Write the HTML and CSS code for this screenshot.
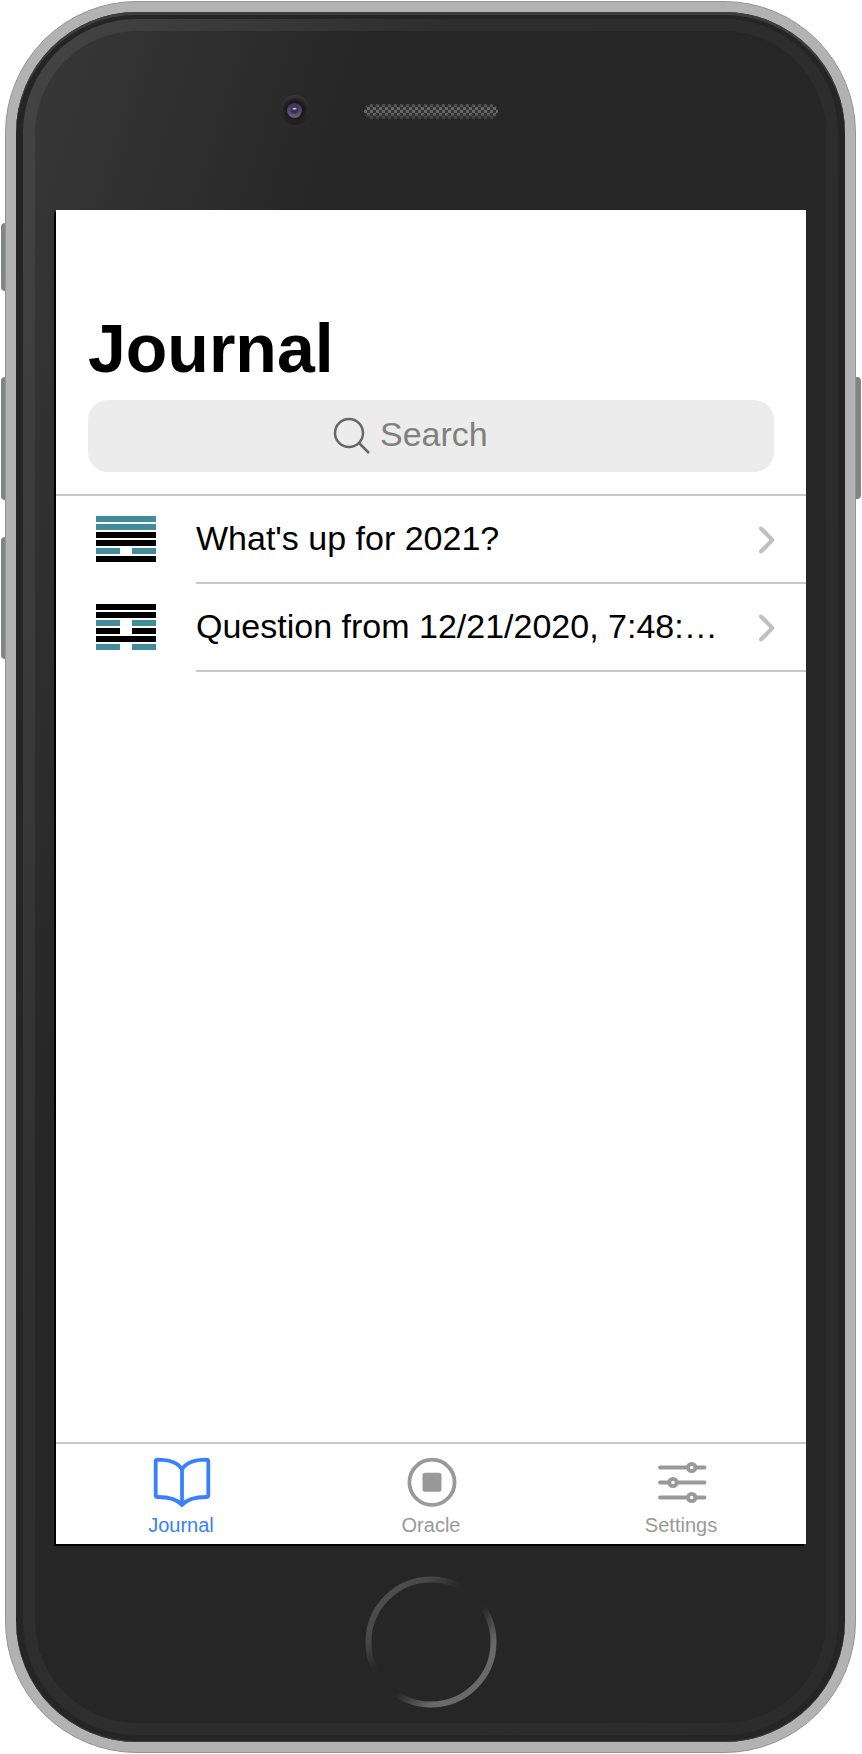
FILE: index.html
```
<!DOCTYPE html>
<html lang="en">
<head>
<meta charset="utf-8">
<title>Journal</title>
<link rel="stylesheet" href="styles.css">
</head>
<body>
<div class="device">
  <span class="key key-mute"></span>
  <span class="key key-up"></span>
  <span class="key key-down"></span>
  <span class="key key-power"></span>
  <div class="frame">
    <div class="bezel">
      <div class="rim">
        <div class="face">
          <div class="sensors">
            <span class="camera"><span class="lens"></span></span>
            <svg class="speaker" viewBox="0 0 134 15">
              <defs>
                <pattern id="mesh" width="6" height="6" patternUnits="userSpaceOnUse">
                  <rect width="6" height="6" fill="#333"/>
                  <rect width="3" height="3" fill="#6b6b6b"/>
                  <rect x="3" y="3" width="3" height="3" fill="#6b6b6b"/>
                </pattern>
                <linearGradient id="shade" x1="0" y1="0" x2="0" y2="1">
                  <stop offset="0" stop-color="#262626" stop-opacity=".55"/>
                  <stop offset=".3" stop-color="#262626" stop-opacity="0"/>
                  <stop offset=".6" stop-color="#262626" stop-opacity=".1"/>
                  <stop offset="1" stop-color="#262626" stop-opacity=".75"/>
                </linearGradient>
              </defs>
              <rect width="134" height="15" rx="7.5" fill="url(#mesh)"/>
              <rect width="134" height="15" rx="7.5" fill="url(#shade)"/>
            </svg>
          </div>
          <main class="screen">
            <header class="header">
              <h1 class="title">Journal</h1>
              <div class="search">
                <svg class="search-icon" viewBox="0 0 38 38"><circle cx="16" cy="16" r="14" /><path d="M26 26l10 10"/></svg>
                <span>Search</span>
              </div>
            </header>
            <ul class="entries">
              <li class="entry">
                <svg class="hexagram" viewBox="0 0 60 46">
                  <path class="moving" d="M0 0h60v6H0zM0 8h60v6H0zM0 32h24v6H0zM36 32h24v6H36z"/>
                  <path d="M0 16h60v6H0zM0 24h60v6H0zM0 40h60v6H0z"/>
                </svg>
                <div class="entry-body">
                  <span class="entry-title">What's up for 2021?</span>
                  <svg class="chevron" viewBox="0 0 16 28"><path d="M2 2.500L13.300 14 2 25.500"/></svg>
                </div>
              </li>
              <li class="entry">
                <svg class="hexagram" viewBox="0 0 60 46">
                  <path class="moving" d="M0 16h24v6H0zM36 16h24v6H36zM0 40h24v6H0zM36 40h24v6H36z"/>
                  <path d="M0 0h60v6H0zM0 8h60v6H0zM0 24h24v6H0zM36 24h24v6H36zM0 32h60v6H0z"/>
                </svg>
                <div class="entry-body">
                  <span class="entry-title">Question from 12/21/2020, 7:48:…</span>
                  <svg class="chevron" viewBox="0 0 16 28"><path d="M2 2.500L13.300 14 2 25.500"/></svg>
                </div>
              </li>
            </ul>
            <nav class="tabs">
              <div class="tab active">
                <svg class="tab-icon" viewBox="0 0 60 60"><path d="M30 16.500C26 9.500 16 6.700 5.500 6.700Q3.700 6.700 3.700 8.500V42Q3.700 44 5.700 44C16 44 25 46 30 52C35 46 44 44 54.300 44Q56.300 44 56.300 42V8.500Q56.300 6.700 54.500 6.700C44 6.700 34 9.500 30 16.500V52"/></svg>
                <span>Journal</span>
              </div>
              <div class="tab">
                <svg class="tab-icon" viewBox="0 0 60 60"><circle cx="30" cy="29.300" r="22.600"/><rect class="solid" x="20.500" y="19.800" width="19" height="19" rx="2.500"/></svg>
                <span>Oracle</span>
              </div>
              <div class="tab">
                <svg class="tab-icon" viewBox="0 0 60 60"><path d="M8 14.500H36M44 14.500H52.500M8 29.500H17M25.500 29.500H52.500M8 44.500H36M44 44.500H52.500"/><circle cx="39.700" cy="14.500" r="3.700"/><circle cx="21" cy="29.500" r="3.700"/><circle cx="39.700" cy="44.500" r="3.700"/></svg>
                <span>Settings</span>
              </div>
            </nav>
          </main>
          <div class="chin">
            <svg class="home" viewBox="0 0 132 132">
              <defs>
                <linearGradient id="ring" x1="0" y1="0" x2="1" y2="1">
                  <stop offset=".1" stop-color="#505050"/>
                  <stop offset=".25" stop-color="#464646"/>
                  <stop offset=".37" stop-color="#292929"/>
                  <stop offset=".42" stop-color="#262626"/>
                  <stop offset=".57" stop-color="#262626"/>
                  <stop offset=".75" stop-color="#686868"/>
                  <stop offset="1" stop-color="#6c6c6c"/>
                </linearGradient>
              </defs>
              <circle cx="66" cy="66" r="62.500" fill="none" stroke="url(#ring)" stroke-width="6"/>
            </svg>
          </div>
        </div>
      </div>
    </div>
  </div>
</div>
</body>
</html>
```
FILE: styles.css
```
* { box-sizing: border-box; }
body {
  margin: 0;
  background: #fff;
  font-family: "Liberation Sans", Arial, sans-serif;
}
.device {
  position: relative;
  width: 862px;
  height: 1754px;
  padding: 1px 6px 1px 5px;
}
.frame {
  position: relative;
  height: 100%;
  padding: 10px;
  border: 1px solid #949494;
  border-radius: 132px;
  background: #b2b2b2;
}
.bezel {
  height: 100%;
  padding: 7px;
  border-radius: 121px;
  background: #252525;
  box-shadow: inset 0 3px 0 #3d3d3d, inset 0 -1px 0 #3d3d3d;
}
.rim {
  height: 100%;
  padding: 12px;
  border-radius: 114px;
  background: linear-gradient(107deg, #454545 0, #2e2e2e 400px, #2b2b2b 100%);
}
.face {
  display: grid;
  grid-template-rows: 179px 1334px 1fr;
  height: 100%;
  padding: 0 20px 0 21px;
  border-radius: 102px;
  background: linear-gradient(107deg, #383838 0, #262626 335px);
}
.sensors {
  display: flex;
  align-items: flex-start;
  padding: 64px 0 0 223.500px;
}
.camera {
  display: grid;
  place-items: center;
  width: 30px;
  height: 30px;
  border-radius: 50%;
  background: radial-gradient(circle, #18181c 8px, #1e1e1e 10px, transparent 13px), linear-gradient(#343434, #202020);
}
.lens {
  width: 15px;
  height: 15px;
  border-radius: 50%;
  background: radial-gradient(ellipse 3px 1.500px at 50% 38%, #c8c0d4 30%, transparent), radial-gradient(circle at 50% 48%, #34303c 3px, transparent 4.500px), linear-gradient(#3c2e5c, #6c5c8c);
}
.speaker {
  width: 134px;
  height: 15px;
  margin: 9px 0 0 54.500px;
}
.screen {
  display: flex;
  flex-direction: column;
  width: 750px;
  height: 1334px;
  background: #fff;
  box-shadow: -2px 2px 0 #000;
}
.header {
  height: 286px;
  padding: 98px 32px 0;
  border-bottom: 2px solid #c8c8c8;
}
.title {
  margin: 0;
  font-size: 68px;
  line-height: 80px;
  font-weight: 700;
}
.search {
  display: flex;
  align-items: center;
  gap: 9px;
  height: 72px;
  margin-top: 12px;
  padding-left: 245px;
  border-radius: 20px;
  background: #ececec;
  color: #808080;
  font-size: 34px;
  line-height: 40px;
}
.search span { padding-bottom: 4px; }
.search-icon {
  width: 38px;
  height: 38px;
  fill: none;
  stroke: #666;
  stroke-width: 2.500;
}
.entries {
  flex: 1;
  margin: 0;
  padding: 0;
  list-style: none;
}
.entry {
  display: flex;
  align-items: flex-start;
  gap: 40px;
  height: 88px;
  padding-left: 40px;
}
.hexagram {
  flex: none;
  width: 60px;
  height: 46px;
  margin-top: 20px;
}
.hexagram .moving { fill: #428b9b; }
.entry-body {
  display: flex;
  align-items: center;
  flex: 1;
  min-width: 0;
  height: 88px;
  padding-right: 31px;
  border-bottom: 2px solid #c8c7cc;
}
.entry-title {
  flex: 1;
  min-width: 0;
  margin-right: 32px;
  padding-bottom: 2px;
  font-size: 34px;
  line-height: 44px;
  white-space: nowrap;
}
.chevron {
  width: 16px;
  height: 28px;
  margin-top: 2px;
  fill: none;
  stroke: #c0c0c0;
  stroke-width: 4;
  stroke-linecap: round;
  stroke-linejoin: round;
}
.tabs {
  display: grid;
  grid-template-columns: repeat(3, 1fr);
  height: 102px;
  border-top: 2px solid #c9c9c9;
}
.tab {
  display: flex;
  flex-direction: column;
  align-items: center;
  padding-top: 9px;
  color: #999;
  font-size: 20px;
  line-height: 24px;
}
.tab.active { color: #3880ff; }
.tab-icon {
  width: 60px;
  height: 60px;
  margin: 0 0 0 2px;
  fill: none;
  stroke: currentColor;
  stroke-width: 3.800;
  stroke-linecap: round;
  stroke-linejoin: round;
}
.tab-icon .solid { fill: currentColor; stroke: none; }
.chin {
  display: flex;
  justify-content: center;
  padding-top: 32px;
}
.home {
  width: 132px;
  height: 132px;
}
.key {
  position: absolute;
  border-radius: 4px;
  background: #83838a;
}
.key-mute { left: 1px; top: 223px; width: 8px; height: 68px; }
.key-up { left: 1px; top: 377px; width: 8px; height: 123px; }
.key-down { left: 1px; top: 537px; width: 8px; height: 122px; }
.key-power { left: 852px; top: 377px; width: 9px; height: 122px; }
```
